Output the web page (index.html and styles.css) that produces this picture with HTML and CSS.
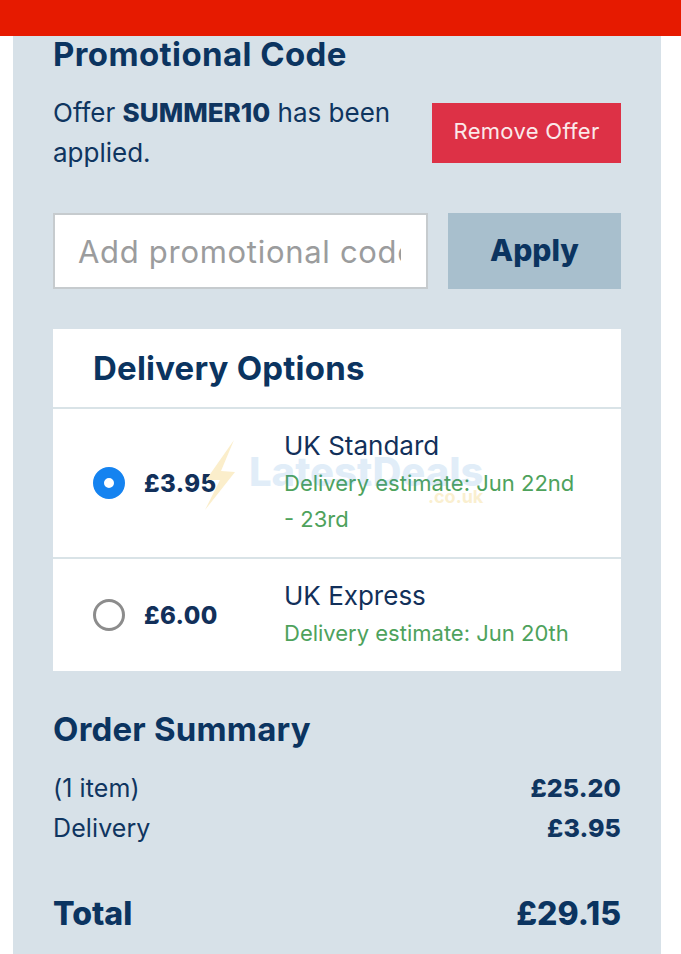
FILE: index.html
```html
<!DOCTYPE html>
<html lang="en">
<head>
<meta charset="utf-8">
<title>Checkout</title>
<link rel="stylesheet" href="styles.css">
</head>
<body>
<header class="topbar"></header>
<main class="panel">
  <h2 class="heading promo-heading">Promotional Code</h2>
  <div class="offer">
    <p class="offer-text">Offer <strong>SUMMER10</strong> has been applied.</p>
    <button class="remove" type="button">Remove Offer</button>
  </div>
  <form class="promo-form">
    <input class="promo-input" type="text" placeholder="Add promotional code">
    <button class="apply" type="button">Apply</button>
  </form>
  <section class="delivery">
    <h2 class="heading delivery-heading">Delivery Options</h2>
    <div class="option option-first">
      <span class="radio radio-on"></span>
      <span class="price">£3.95</span>
      <div class="details">
        <div class="name">UK Standard</div>
        <div class="estimate">Delivery estimate: Jun 22nd - 23rd</div>
      </div>
    </div>
    <div class="option option-second">
      <span class="radio"></span>
      <span class="price">£6.00</span>
      <div class="details">
        <div class="name">UK Express</div>
        <div class="estimate">Delivery estimate: Jun 20th</div>
      </div>
    </div>
  </section>
  <section class="summary">
    <h2 class="heading summary-heading">Order Summary</h2>
    <div class="line"><span>(1 item)</span><strong>£25.20</strong></div>
    <div class="line"><span>Delivery</span><strong>£3.95</strong></div>
    <div class="total"><span>Total</span><span>£29.15</span></div>
  </section>
</main>
<div class="watermark">
  <svg class="bolt" width="36" height="72" viewBox="0 0 36 72"><path d="M33 1 L5 41 L19 41 L4 71 L34 33 L20 32 Z" fill="#fbeecb"/></svg>
  <span class="wm-text">LatestDeals</span>
  <span class="wm-sub">.co.uk</span>
</div>
</body>
</html>
```
FILE: styles.css
```css
* { box-sizing: border-box; }
html, body { margin: 0; padding: 0; height: 954px; overflow: hidden; background: #fff; }
body { font-family: "Inter", "Liberation Sans", sans-serif; color: #0f3560; position: relative; }
.topbar { height: 36px; background: #e61a00; }
.panel { margin: 0 20px 0 13px; background: #d7e1e8; padding: 0 40px; height: 918px; }
.heading { margin: 0; font-weight: 700; font-size: 33px; letter-spacing: .2px; line-height: 36px; color: #0b3460; }
.promo-heading { letter-spacing: .4px; }
.offer { display: flex; align-items: center; justify-content: space-between; height: 80px; margin-top: 21px; }
.offer-text { margin: 0; width: 350px; font-size: 26px; line-height: 40px; color: #0f3560; }
.offer-text strong { font-weight: 800; }
.remove { width: 189px; height: 60px; border: 0; background: #dd3146; color: #fbe9ea; font: 400 22px "Inter", sans-serif; letter-spacing: .3px; padding: 0 0 5px; }
.promo-form { display: flex; gap: 20px; margin-top: 40px; }
.promo-input { width: 375px; height: 76px; border: 2px solid #c6cbce; background: #fff; padding: 0 25px 0 23px; font: 400 31px "Inter", sans-serif; letter-spacing: .7px; color: #999; }
.promo-input::placeholder { color: #9b9c9d; opacity: 1; }
.apply { width: 173px; height: 76px; border: 0; background: #a8bfcd; color: #0b3460; font: 800 30px "Inter", sans-serif; padding: 0 0 2px; }
.delivery { margin-top: 40px; background: #fff; }
.delivery-heading { padding: 21px 40px; height: 78px; }
.option { display: flex; align-items: center; padding: 0 40px; border-top: 2px solid #d9e3e7; }
.option-first { height: 150px; }
.option-second { height: 114px; }
.radio { width: 32px; height: 32px; border-radius: 50%; border: 3px solid #8c8c8c; background: #fff; flex: none; }
.radio-on { border: 11px solid #1583f0; }
.price { width: 140px; margin-left: 19px; flex: none; font-weight: 800; font-size: 24px; letter-spacing: .4px; color: #12305a; }
.details { flex: 1; }
.name { font-size: 26px; line-height: 36px; color: #12305a; margin-top: -1px; margin-bottom: 1px; }
.estimate { font-size: 22px; line-height: 36px; color: #4ea25c; }
.summary { padding-top: 40px; }
.summary-heading { margin-bottom: 21px; }
.line { display: flex; justify-content: space-between; font-size: 25px; letter-spacing: .1px; line-height: 40px; color: #0f3560; }
.line strong { font-weight: 800; }
.total { display: flex; justify-content: space-between; margin-top: 46px; font-weight: 800; font-size: 32px; line-height: 40px; color: #0b3460; }
.watermark { position: absolute; left: 0; top: 0; width: 681px; height: 954px; pointer-events: none; }
.bolt { position: absolute; left: 201px; top: 439px; }
.wm-text { position: absolute; left: 249px; top: 447px; font: 800 40px "Inter", sans-serif; color: #3b8fd6; opacity: .15; white-space: nowrap; }
.wm-sub { position: absolute; left: 428px; top: 486px; font: 700 18px "Inter", sans-serif; color: #f5d98a; opacity: .4; white-space: nowrap; }
```
